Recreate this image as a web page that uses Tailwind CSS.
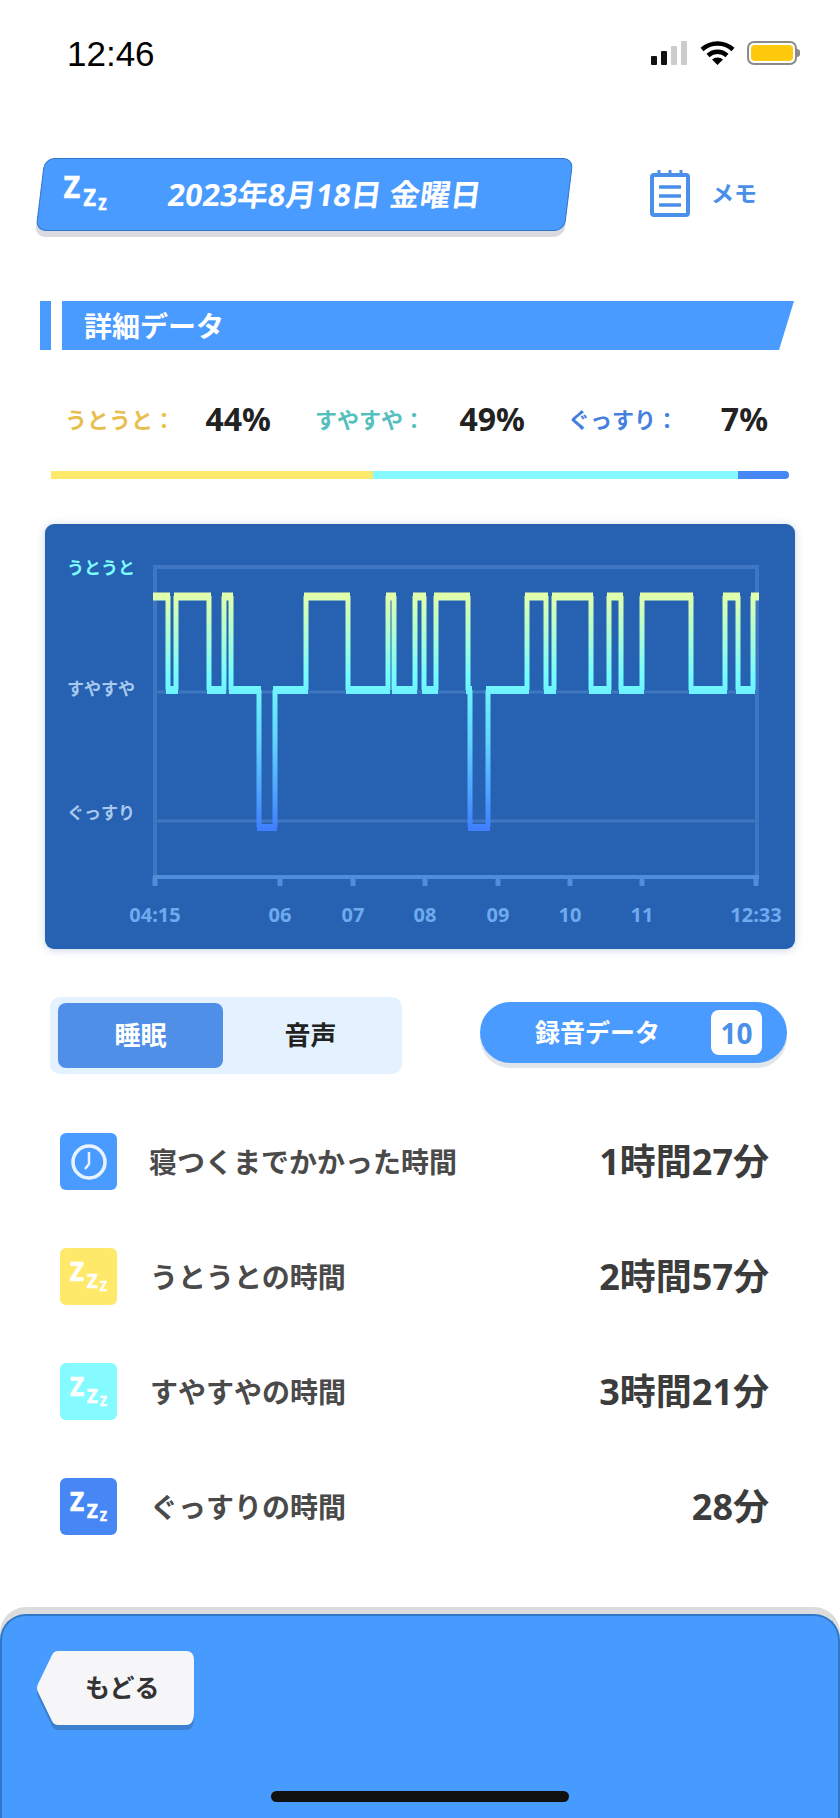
<!DOCTYPE html>
<html lang="ja">
<head>
  <meta charset="UTF-8" />
  <title>詳細データ</title>
  <script src="https://cdn.jsdelivr.net/npm/@tailwindcss/browser@4"></script>
</head>
<body class="bg-white">
<svg class="hidden">
  <symbol id="zzz" viewBox="0 0 57 57">
    <g fill="currentColor" stroke="currentColor" stroke-width="0.6" font-weight="700">
      <text transform="translate(10 33) scale(0.92 1)" font-size="26.500">Z</text>
      <text transform="translate(27 40) scale(0.95 1)" font-size="19.500">Z</text>
      <text transform="translate(40 43) scale(0.85 1)" font-size="14">Z</text>
    </g>
  </symbol>
</svg>

<div class="w-[840px] h-[1818px] flex flex-col overflow-hidden bg-white font-['Noto_Sans','Noto_Sans_CJK_JP',sans-serif]">

  <!-- Status bar -->
  <div class="flex items-center justify-between h-[24px] mt-[41px] pl-[67px] pr-[40px]">
    <span class="font-['Liberation_Sans',sans-serif] text-[35px] leading-none text-black">12:46</span>
    <div class="flex items-center">
      <svg class="w-[36px] h-[24px]" viewBox="0 0 36 24">
        <rect x="0" y="15" width="6" height="9" rx="1" fill="#111" />
        <rect x="10" y="10" width="6" height="14" rx="1" fill="#111" />
        <rect x="20" y="5" width="6" height="19" rx="1" fill="#ccc" />
        <rect x="30" y="0" width="6" height="24" rx="1" fill="#ccc" />
      </svg>
      <svg class="w-[35px] h-[24px] ml-[13px]" viewBox="0 0 35 24" fill="none" stroke="#000" stroke-width="4.4">
        <path d="M2 8.500C11 .5 24 .5 33 8.500" />
        <path d="M8 14.500c5.500-5 13.500-5 19 0" />
        <path d="M17.500 24l-5.500-5.500c3-2.800 8-2.800 11 0z" fill="#000" stroke="none" />
      </svg>
      <div class="flex items-center ml-[12px]">
        <div class="w-[50px] h-[24px] rounded-[7px] border-2 border-[#8a8a8a] p-[2px]">
          <div class="w-full h-full rounded-[4px] bg-[#ffc90e]"></div>
        </div>
        <div class="w-[3px] h-[8px] rounded-r bg-[#8a8a8a]"></div>
      </div>
    </div>
  </div>

  <!-- Date bar + memo -->
  <div class="flex items-start h-[143px] mt-[93px] pl-[40px]">
    <div class="flex items-start w-[529px] h-[73px] -skew-x-[7deg] rounded-[10px] border border-[#2f77c8] bg-[#4a9bff] shadow-[0_6px_0_#d9dbe0]">
      <svg class="w-[66px] h-[66px] ml-[11px] mt-[1px] skew-x-[7deg] text-white"><use href="#zzz" /></svg>
      <span class="ml-[50px] mt-[15px] text-[30.500px] leading-[40px] font-bold text-white whitespace-nowrap">2023年8月18日 金曜日</span>
    </div>
    <svg class="w-[40px] h-[47px] ml-[81px] mt-[12px]" viewBox="0 0 40 47" fill="none" stroke="#4a90e8" stroke-width="4">
      <rect x="2" y="5" width="36" height="40" rx="2" />
      <path d="M9 0v7M20 0v7M31 0v7" stroke-width="3" />
      <path d="M9 17h22M9 26h22M9 35h22" stroke-width="3.500" />
    </svg>
    <span class="ml-[21px] mt-[20px] text-[23px] leading-[30px] font-bold text-[#4a90e8]">メモ</span>
  </div>

  <!-- Section title -->
  <div class="flex h-[49px] ml-[40px] w-[754px]">
    <div class="w-[11px] bg-[#4a9bff]"></div>
    <div class="flex-1 ml-[11px] flex items-center pl-[22px] bg-[#4a9bff] [clip-path:polygon(0_0,100%_0,calc(100%-15px)_100%,0_100%)]">
      <span class="text-[28px] leading-none font-bold text-white">詳細データ</span>
    </div>
  </div>

  <!-- Percent row -->
  <div class="flex items-center h-[36px] mt-[51px] pl-[65px]">
    <div class="flex items-center justify-between w-[206px]">
      <span class="text-[22px] font-bold text-[#e8bf4f]">うとうと：</span>
      <span class="text-[32px] font-bold text-[#222]">44%</span>
    </div>
    <div class="flex items-center justify-between w-[210px] ml-[44px]">
      <span class="text-[22px] font-bold text-[#55bfbd]">すやすや：</span>
      <span class="text-[32px] font-bold text-[#222]">49%</span>
    </div>
    <div class="flex items-center justify-between w-[200px] ml-[43px]">
      <span class="text-[22px] font-bold text-[#4480e0]">ぐっすり：</span>
      <span class="text-[32px] font-bold text-[#222]">7%</span>
    </div>
  </div>

  <div class="flex h-[8px] w-[738px] mt-[34px] ml-[51px]">
    <div class="w-[322px] bg-[#ffe96b]"></div>
    <div class="w-[365px] bg-[#85faff]"></div>
    <div class="w-[51px] rounded-r-sm bg-[#4687f5]"></div>
  </div>

  <!-- Sleep chart -->
  <div class="w-[750px] h-[425px] mt-[45px] ml-[45px] rounded-[9px] bg-[#2662b1] shadow-[0_1px_8px_rgba(40,80,140,0.25)]">
    <svg class="w-full h-full" viewBox="45 524 750 425" font-weight="700">
      <defs>
        <linearGradient id="trace" gradientUnits="userSpaceOnUse" x1="0" y1="592" x2="0" y2="831">
          <stop offset="0" stop-color="#e6ffa8" />
          <stop offset="0.36" stop-color="#72fbff" />
          <stop offset="0.62" stop-color="#62d4ff" />
          <stop offset="1" stop-color="#3f7dff" />
        </linearGradient>
      </defs>
      <g fill="none" stroke="#3e76c2" stroke-width="4">
        <path d="M155 877V567H757V877" />
        <path d="M155 692H757M155 821H757" stroke-width="3" />
      </g>
      <g fill="none" stroke="#4f8ed8" stroke-width="5">
        <path d="M153 877H759" stroke-width="4" />
        <path d="M155 877v9M280 877v9M353 877v9M425 877v9M498 877v9M570 877v9M642 877v9M756 877v9" />
      </g>
      <path fill="none" stroke="url(#trace)" stroke-width="5" d="M168 596V690M176 596V690M209 596V690M224 596V690M231 596V690M259 690V827M275 690V827M306 596V690M348 596V690M388 596V690M394 596V690M415 596V690M424 596V690M436 596V690M468 596V690M470 690V827M488 690V827M527 596V690M546 596V690M554 596V690M591 596V690M609 596V690M621 596V690M642 596V690M691 596V690M725 596V690M738 596V690M753 596V690" />
      <path fill="none" stroke="url(#trace)" stroke-width="8" d="M153 596.500H170M174 596.500H211M222 596.500H233M304 596.500H350M386 596.500H396M413 596.500H426M434 596.500H470M525 596.500H548M552 596.500H593M607 596.500H623M640 596.500H693M723 596.500H740M751 596.500H759" />
      <path fill="none" stroke="url(#trace)" stroke-width="8" d="M166 690H178M207 690H226M229 690H261M273 690H308M346 690H390M392 690H417M422 690H438M466 690H472M486 690H529M544 690H556M589 690H611M619 690H644M689 690H727M736 690H755" />
      <path fill="none" stroke="url(#trace)" stroke-width="7" d="M257 827.500H277M468 827.500H490" />
      <g font-size="17">
        <text x="67" y="574" fill="#7ffcff">うとうと</text>
        <text x="67" y="695" fill="#a9c8ee">すやすや</text>
        <text x="67" y="819" fill="#a9c8ee">ぐっすり</text>
      </g>
      <g font-size="20" fill="#6fa9ee" text-anchor="middle">
        <text x="155" y="922">04:15</text>
        <text x="280" y="922">06</text>
        <text x="353" y="922">07</text>
        <text x="425" y="922">08</text>
        <text x="498" y="922">09</text>
        <text x="570" y="922">10</text>
        <text x="642" y="922">11</text>
        <text x="756" y="922">12:33</text>
      </g>
    </svg>
  </div>

  <!-- Tabs + recordings -->
  <div class="flex items-start mt-[48px] ml-[50px]">
    <div class="flex w-[352px] h-[77px] pl-[8px] py-[6px] rounded-[10px] bg-[#e4f1fe]">
      <div class="flex items-center justify-center w-[165px] rounded-[8px] bg-[#4f8fe8] text-[26px] font-bold text-white">睡眠</div>
      <div class="flex items-center justify-center w-[175px] text-[26px] font-bold text-[#222]">音声</div>
    </div>
    <div class="flex items-center w-[307px] h-[61px] ml-[78px] mt-[5px] pl-[55px] rounded-full bg-[#4a9bff] shadow-[0_5px_0_#e2e6ea]">
      <span class="text-[25px] font-bold text-white whitespace-nowrap">録音データ</span>
      <span class="flex items-center justify-center w-[51px] h-[45px] ml-[51px] rounded-[8px] bg-white text-[28px] font-bold text-[#4a90e8]">10</span>
    </div>
  </div>

  <!-- Durations -->
  <div class="flex flex-col gap-[58px] w-[709px] mt-[59px] ml-[60px] text-[28px]">
    <div class="flex items-center h-[57px]">
      <div class="flex items-center justify-center w-[57px] h-[57px] rounded-[6px] bg-[#4a9bff]">
        <svg class="w-[36px] h-[36px]" viewBox="0 0 36 36" fill="none" stroke="#e8f3ff">
          <circle cx="18" cy="18" r="16" stroke-width="3.500" />
          <path d="M18 8V20L14 25" stroke-width="2.500" />
        </svg>
      </div>
      <span class="ml-[32px] font-bold text-[#4a4a4a]">寝つくまでかかった時間</span>
      <span class="ml-auto text-[36px] font-bold text-[#3c3c3c]">1時間27分</span>
    </div>
    <div class="flex items-center h-[57px]">
      <svg class="w-[57px] h-[57px] rounded-[6px] bg-[#ffe96b] text-white"><use href="#zzz" /></svg>
      <span class="ml-[33px] font-bold text-[#4a4a4a]">うとうとの時間</span>
      <span class="ml-auto text-[36px] font-bold text-[#3c3c3c]">2時間57分</span>
    </div>
    <div class="flex items-center h-[57px]">
      <svg class="w-[57px] h-[57px] rounded-[6px] bg-[#85faff] text-white"><use href="#zzz" /></svg>
      <span class="ml-[33px] font-bold text-[#4a4a4a]">すやすやの時間</span>
      <span class="ml-auto text-[36px] font-bold text-[#3c3c3c]">3時間21分</span>
    </div>
    <div class="flex items-center h-[57px]">
      <svg class="w-[57px] h-[57px] rounded-[6px] bg-[#4687f5] text-white"><use href="#zzz" /></svg>
      <span class="ml-[33px] font-bold text-[#4a4a4a]">ぐっすりの時間</span>
      <span class="ml-auto text-[36px] font-bold text-[#3c3c3c]">28分</span>
    </div>
  </div>

  <!-- Footer -->
  <div class="flex flex-col mt-auto h-[204px] rounded-t-[26px] border-2 border-b-0 border-[#2f78c8] bg-[#479bff] shadow-[0_-7px_0_#dcdcdc]">
    <div class="relative w-[160px] h-[80px] ml-[34px] mt-[35px]">
      <svg class="absolute inset-0 w-full h-full" viewBox="0 0 160 80">
        <path d="M22 5H150Q158 5 158 14V66Q158 79 150 79H22Q18 79 16 75L2 46Q0 42 2 38L16 7Q18 5 22 5Z" fill="#3d80d0" />
        <path d="M22 0H150Q158 0 158 9V61Q158 74 150 74H22Q18 74 16 70L2 41Q0 37 2 33L16 4Q18 0 22 0Z" fill="#f6f6f8" />
      </svg>
      <span class="absolute left-[49px] top-[16px] text-[25px] leading-[40px] font-bold text-[#333]">もどる</span>
    </div>
    <div class="w-[298px] h-[11px] mt-[60px] mx-auto rounded-full bg-[#111]"></div>
  </div>
</div>
</body>
</html>
